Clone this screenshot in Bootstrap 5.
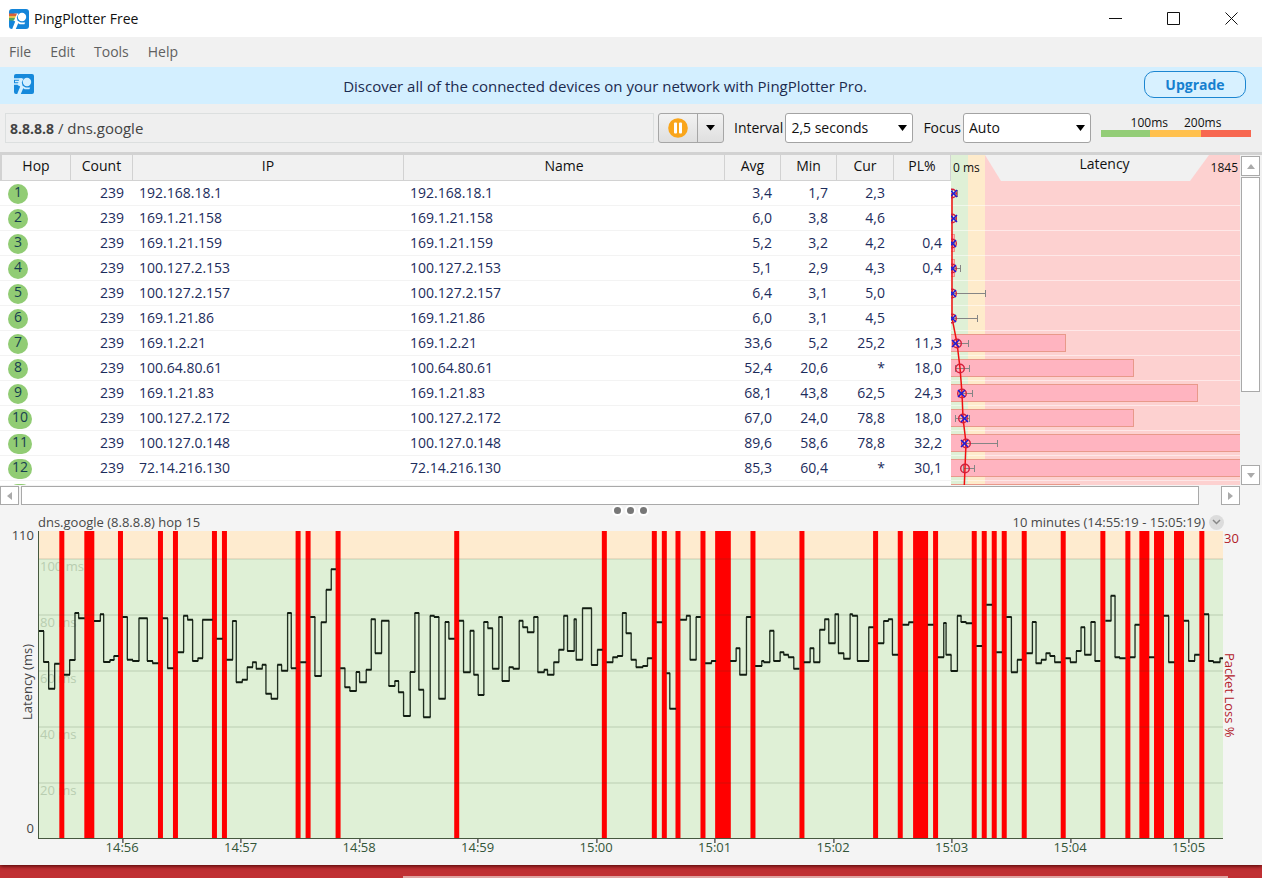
<!DOCTYPE html>
<html lang="en">
<head>
<meta charset="utf-8">
<meta name="viewport" content="width=device-width, initial-scale=1">
<title>PingPlotter Free</title>
<link href="https://cdn.jsdelivr.net/npm/bootstrap@5.3.0/dist/css/bootstrap.min.css" rel="stylesheet">
<style>
body{font:14px/20px "Open Sans","Noto Sans",sans-serif;background:#c03033;color:#111;overflow:hidden}
.win{background:#f4f4f4;box-shadow:0 1px 4px #400}
.titlebar{height:37px;background:#fff;padding-right:2px}
.titlebar button,.menu a,.sb,.chev{border:0;background:none;padding:0;color:#111}
.titlebar button{width:58px;height:37px}
.menu{height:30px;background:#f1f1f1;padding:0 9px;gap:19px}
.menu a{color:#606060;text-decoration:none}
.promo{height:37px;background:#d3efff;color:#1c2b4f}
.promo span{font-size:15px;padding-left:32px}
.upgrade{width:102px;height:27px;padding:0;margin-top:-2px;line-height:20px;border:1px solid #1c86d1;border-radius:10px;background:#d8f1ff;color:#1580cf;font-weight:700}
.tools{height:48px;background:#efefef;padding:0 11px 0 5px}
.target{height:30px;border:1px solid #dcdfdf;color:#444;line-height:28px;padding-left:4px;min-width:0;font-size:15px}
.target b{font-size:14px}
.split{height:30px;width:66px;border:1px solid #a6a6a6;border-radius:3px;background:linear-gradient(#f2f2f2,#dfdfdf);overflow:hidden}
.split button{border:0;background:none;padding:0}
.split button+button{border-left:1px solid #a6a6a6;width:26px}
.pick{width:128px;height:30px;padding:0 5px;border:1px solid #a3a3a3;border-radius:3px;appearance:none;color:#111;background:#fff url("data:image/svg+xml,%3Csvg xmlns='http://www.w3.org/2000/svg' width='9' height='6'%3E%3Cpath d='M0 0H9L4.500 6Z'/%3E%3C/svg%3E") no-repeat right 5px center}
.tools label{margin:0 2px 0 10px}
.legend{width:150px;margin:-4px 0 0 10px;font-size:12px;line-height:14px}
.legend .bar{height:7px;background:linear-gradient(90deg,#93cd77 33%,#ffc04d 33% 67%,#f76750 67%)}
.trace{height:333px;border-top:3px solid #d2d2d2;background:#fff;overflow:hidden}
.hops{table-layout:fixed;border-collapse:separate;border-spacing:0;width:100%;color:#1c2c5c}
.hops th{height:26px;padding:0 0 4px;background:#f1f1f1;border:solid #d2d2d2;border-width:0 1px 1px 0;font-weight:400;text-align:center;color:#111;line-height:20px}
.hops th:first-child{border-left:2px solid #d2d2d2}
.hops td{height:25px;padding:0 9px 1px;border-bottom:1px solid #f3f3f3;text-align:right;line-height:20px}
.hops td:nth-child(1){text-align:left;padding:0 8px}
.hops td:nth-child(3),.hops td:nth-child(4){text-align:left;padding-left:6px}
.hops td:last-child{padding-right:9px}
.pill{display:inline-block;min-width:20px;height:20px;padding:0 4px;border-radius:10px;background:#91cc74;line-height:16px;color:#173f50;text-align:center;vertical-align:top;margin-top:2px}
.lat{width:289px;overflow:hidden}
.lat span{position:absolute;line-height:20px}
.vs{width:22px;background:#f2f2f2;padding:1px 2px 0 1px}
.sb{width:19px;height:20px;border:1px solid #a9a9a9;background:#fff;line-height:0;flex:none}
.thumb{border:1px solid #a9a9a9;background:#fff}
.hs{height:19px;padding-right:22px;margin-top:1px}
.dots{height:10px;gap:6px;padding-right:1px}
.dots i{width:7px;height:7px;border-radius:50%;background:#777;box-shadow:0 0 0 2px #fff}
.cap{height:16px;padding:0 38px 2px;font-size:13px;line-height:14px;color:#484848}
.chev{width:15px;height:15px;border-radius:50%;background:#dcdcdc;line-height:0}
.side{width:38px;font-size:13px;line-height:14px;color:#444}
.side.r{width:39px;color:#b22028}
.turn{writing-mode:vertical-rl}
.plot{background:linear-gradient(#feebcf 9%,#dff0d6 9%);border:solid #46583f;border-width:0 0 1px 1px;min-width:0}
.plot span{position:absolute;left:1px;color:#b8cdb0;font-size:13px;line-height:14px}
.axis{height:26px;padding:0 39px 0 38px;color:#335538;font-size:13px;line-height:16px}
.axis span{position:absolute;transform:translateX(-50%)}
.axis span::before{content:"";position:absolute;left:50%;top:0;height:4px;border-left:1px solid #111}
.desk{height:13px;padding:11px 34px 0 403px}
.desk div{height:2px;background:#dfa4a2}
svg{display:block}
</style>
</head>
<body class="vh-100 d-flex flex-column">
<svg width="0" height="0" class="position-absolute"><defs>
<g id="runner"><circle cx="13" cy="8" r="4.200"/><path d="M5.500 4.500h4L7.800 8.500l.8 3.200 3.200 1.800h4.400l-.8 1.700h-4.600L9.200 14.200 6.800 20H3.200l3-7.600L3.500 11z"/></g></defs></svg>
<main class="win flex-grow-1 d-flex flex-column">
<header class="titlebar d-flex align-items-center">
<svg class="ms-2 me-1" width="22" height="20" viewBox="-1 0 22 20"><rect width="20" height="20" rx="3" fill="#1485d9"/><use href="#runner" fill="#fff"/><path d="M0 4.500h8L7 7H0z" fill="#d9603a"/><path d="M0 7h7L6 9H0z" fill="#e6c04a"/><path d="M0 9h6l-1 2.500H0z" fill="#54a65a"/></svg>
<span>PingPlotter Free</span>
<div class="ms-auto d-flex">
<button aria-label="Minimize"><svg class="mx-auto" width="13" height="13"><path d="M0 6.500h13" stroke="#111"/></svg></button>
<button aria-label="Maximize"><svg class="mx-auto" width="13" height="13"><path d="M.5.500h12v12H.5z" fill="none" stroke="#111"/></svg></button>
<button aria-label="Close"><svg class="mx-auto" width="13" height="13"><path d="M.5.500l12 12m0-12l-12 12" stroke="#111"/></svg></button>
</div></header>
<nav class="menu d-flex align-items-center"><a href="#">File</a><a href="#">Edit</a><a href="#">Tools</a><a href="#">Help</a></nav>
<div class="promo d-flex align-items-center">
<svg style="margin:-3px 0 0 14px" width="20" height="20"><rect width="20" height="20" rx="2" fill="#1689db"/><path d="M0 5h8M1 7.500h6M0 10h5" stroke="#d3efff" stroke-width="1.300"/><use href="#runner" fill="#d3efff"/></svg>
<span class="flex-grow-1 text-center">Discover all of the connected devices on your network with PingPlotter Pro.</span>
<button class="upgrade me-3">Upgrade</button></div>
<div class="tools d-flex align-items-center">
<div class="target flex-grow-1" role="textbox" contenteditable="true" aria-label="Target" spellcheck="false"><b>8.8.8.8</b> / dns.google</div>
<div class="split d-flex ms-1"><button class="flex-grow-1" aria-label="Pause"><svg class="mx-auto" width="20" height="20"><circle cx="10" cy="10" r="9.800" fill="#f9a51b"/><rect x="6" y="4.500" width="3" height="11" rx="1" fill="#fff"/><rect x="11" y="4.500" width="3" height="11" rx="1" fill="#fff"/></svg></button><button aria-label="Pause options"><svg class="mx-auto" width="9" height="6"><path d="M0 0h9L4.500 5.500z"/></svg></button></div>
<label for="iv">Interval</label><select class="pick" id="iv"><option>2,5 seconds</option></select>
<label for="fc">Focus</label><select class="pick" id="fc"><option>Auto</option></select>
<div class="legend"><div class="d-flex justify-content-center gap-3"><span>100ms</span><span>200ms</span></div><div class="bar"></div></div>
</div>
<section class="trace d-flex">
<div class="flex-grow-1"><table class="hops"><colgroup><col style="width:71px"><col style="width:62px"><col style="width:28.500%"><col><col style="width:56px"><col style="width:56px"><col style="width:57px"><col style="width:57px"></colgroup>
<thead><tr><th>Hop<th>Count<th>IP<th>Name<th>Avg<th>Min<th>Cur<th>PL%</tr></thead><tbody id="rows"></tbody></table></div>
<div class="lat position-relative flex-shrink-0"><svg id="lat" width="290" height="330"><rect width="18" height="330" fill="#dff0d6"/><rect x="17" width="17" height="330" fill="#feebcb"/><rect x="34" width="256" height="330" fill="#fdd1d0"/><path d="M34 0H258L239 26H50z" fill="#f1f1f1"/></svg>
<span style="left:2px;top:3px;font-size:12px">0 ms</span><span style="left:0;right:0;top:-1px;text-align:center;padding-left:18px">Latency</span><span style="right:2px;top:3px;font-size:12px">1845</span></div>
<div class="vs d-flex flex-column flex-shrink-0"><button class="sb" aria-label="Scroll up"><svg class="mx-auto" width="8" height="5"><path d="M0 5h8L4 0z" fill="#aaa"/></svg></button><div class="thumb" style="height:215px;margin-top:1px"></div><button class="sb mt-auto" aria-label="Scroll down"><svg class="mx-auto" width="8" height="5"><path d="M0 0h8L4 5z" fill="#aaa"/></svg></button></div>
</section>
<div class="hs d-flex"><button class="sb h-100" aria-label="Scroll left"><svg class="mx-auto" width="5" height="8"><path d="M5 0v8L0 4z" fill="#aaa"/></svg></button><div class="thumb flex-grow-1" style="margin:0 22px 0 2px"></div><button class="sb h-100" aria-label="Scroll right"><svg class="mx-auto" width="5" height="8"><path d="M0 0v8l5-4z" fill="#aaa"/></svg></button></div>
<div class="dots d-flex justify-content-center align-items-center"><i></i><i></i><i></i></div>
<div class="cap d-flex align-items-center"><span>dns.google (8.8.8.8) hop 15</span><span class="ms-auto me-1">10 minutes (14:55:19 - 15:05:19)</span><button class="chev" aria-label="Time range"><svg class="mx-auto" width="9" height="6"><path d="M1 1l3.500 3.500L8 1" fill="none" stroke="#888" stroke-width="1.500"/></svg></button></div>
<section class="flex-grow-1 d-flex" style="min-height:0">
<div class="side d-flex flex-column justify-content-between align-items-end pe-1 position-relative"><span style="margin-top:-3px">110</span><span class="turn" style="transform:rotate(180deg)">Latency (ms)</span><span class="pb-1">0</span></div>
<div class="plot flex-grow-1 position-relative" id="plot"></div>
<div class="side r position-relative"><span style="padding-left:1px">30</span><span class="turn position-absolute top-50 start-0" style="transform:translateY(-32px)">Packet Loss %</span></div>
</section>
<div class="axis"><div class="position-relative" id="axis"></div></div>
</main>
<footer class="desk"><div></div></footer>
<script src="https://cdn.jsdelivr.net/npm/bootstrap@5.3.0/dist/js/bootstrap.bundle.min.js"></script>
<script>
const hops=[["192.168.18.1","3,4","1,7","2,3",""],["169.1.21.158","6,0","3,8","4,6",""],["169.1.21.159","5,2","3,2","4,2","0,4"],["100.127.2.153","5,1","2,9","4,3","0,4"],["100.127.2.157","6,4","3,1","5,0",""],["169.1.21.86","6,0","3,1","4,5",""],["169.1.2.21","33,6","5,2","25,2","11,3"],["100.64.80.61","52,4","20,6","*","18,0"],["169.1.21.83","68,1","43,8","62,5","24,3"],["100.127.2.172","67,0","24,0","78,8","18,0"],["100.127.0.148","89,6","58,6","78,8","32,2"],["72.14.216.130","85,3","60,4","*","30,1"]];
document.getElementById("rows").innerHTML=hops.map((h,i)=>`<tr><td><span class="pill">${i+1}</span><td>239<td>${h[0]}<td>${h[0]}${h.slice(1).map(v=>`<td>${v}`).join("")}</tr>`).join("")+'<tr><td><span class="pill" style="width:24px"></span><td><td><td><td><td><td><td></tr>';
/* per hop: loss bar width, average, current, whisker start, whisker end */
const lat=[[0,1,2,1,6],[0,1,2,1,5],[4,1,1,1,3],[4,1,1,1,9],[0,1,1,1,34],[0,1,1,1,26],[115,6,4,2,17],[183,9,null,4,18],[247,11,10,8,21],[183,12,13,4,18],[300,15,13,12,46],[300,14,null,12,23],[129,13,null,0,0]];
let s="",line="M1 38";
lat.forEach((d,i)=>{const y=38+i*25;
 s+=`<path d="M0 ${y+12.5}H290" stroke="#fff" stroke-opacity=".5"/>`;
 if(d[0])s+=`<rect x="-1" y="${y-8.5}" width="${d[0]+.5}" height="17" fill="#ffb4c0" stroke="#e8998a"/>`;
 if(d[4])s+=`<path d="M${d[3]} ${y+.5}H${d[4]}M${d[3]+.5} ${y-3}v7M${d[4]+.5} ${y-3}v7" stroke="#858585"/>`;
 line+=`L${d[1]} ${y}`;});
s+=`<path d="${line}" fill="none" stroke="#f01010" stroke-width="1.500"/>`;
lat.slice(0,12).forEach((d,i)=>{const y=38+i*25;s+=`<circle cx="${d[1]}" cy="${y+.5}" r="4.300" fill="none" stroke="#d31e3c" stroke-width="1.400"/>`;
 if(d[2]!==null)s+=`<path d="M${d[2]-3} ${y-3}l7 7m0-7l-7 7" stroke="#1b1bd8" stroke-width="1.500"/>`;});
document.getElementById("lat").innerHTML+=s;

/* latency steps: x y x y … x, one run per unbroken stretch */
const runs=`116 377 130 470 145 550 163 475 177|192 508 208 464 224 323 235 339 252|282 347 300 327 310 470 329 464 341 452 354|368 335 381 463 397 467 416 339 441 467 457 474 473|488 339 502 489 518|533 441 550 331 562 343 577 467 593 459 607 343 636|650 400 666|680 463 697 347 708 531 726 523 741 486 757 471 768 490 786 478 797 565 813 580 832 478 844 496 862 323 873 489 887|901 471 917|931 335 944 512 963 351 978 253 993 192 1006|1021 489 1034 546 1049 557 1068 500 1078 531 1098 493 1113 342 1125 444 1144 346 1166 542 1184 527 1195 561 1210 632 1230 500 1244 323 1256 553 1270 636 1290 331 1302 335 1316 580 1335 350 1346 400 1362|1377 346 1390 501 1410 376 1421 508 1434 569 1451 350 1463 369 1477 490 1496 335 1506 527 1527 486 1539 490 1557 346 1568 366 1582 381 1601 335 1613 501 1632 493 1642 508 1661 471 1676 433 1691 331 1702 437 1722 342 1728 463 1747 309 1774 479 1792 433 1806|1820 471 1838 456 1852 452 1867 323 1878 384 1893 463 1908 486 1928 482 1942 459 1955|1970 351 1985|2000 504 2009 610 2027|2041 343 2059 331 2070 463 2088 335 2101|2116 474 2134 467 2147|2191 467 2208 429 2219 508 2239 335 2252|2266 482 2285 467 2291 471 2309 376 2321 467 2340 441 2351 448 2365 456 2381 490 2397|2412 471 2430 429 2441 471 2459 373 2474 342 2486 414 2505 327 2515 444 2531 460 2550 327 2557 331 2572 467 2606 366 2619|2634 414 2651 347 2665 342 2677 448 2693|2708 358 2726 351 2739|2784 358 2799|2814 456 2831 353 2838 448 2853 497 2872 331 2883 350 2898 354 2915|2930 422 2945|2960 298 2975|2990 441 3005|3020 335 3034 501 3052 463 3065|3080 444 3097 350 3108 474 3124 463 3138 444 3150 452 3164 471 3182|3197 459 3211 471 3229 437 3243 366 3254 448 3273 350 3285 467 3300|3317 346 3333 271 3345 456 3359 459 3376|3391 456 3405 358 3418|3448 456 3462|3492 331 3506 471 3522|3552 346 3566 467 3584 448 3598|3613 327 3626 467 3640 471 3660 459 3669`;
const loss=[177,192,252,282,353,368,473,488,518,533,635,650,665,680,886,901,916,931,1006,1021,1362,1377,1805,1820,1955,1970,1985,2000,2026,2041,2101,2116,2145,2192,2251,2266,2398,2413,2619,2634,2693,2708,2739,2784,2799,2814,2915,2930,2945,2960,2975,2990,3005,3020,3065,3080,3182,3197,3301,3316,3376,3391,3418,3448,3462,3492,3522,3552,3598,3613];
let flat="",rise="",bars="";
runs.split("|").forEach(r=>{const n=r.split(" ").map(Number);
 for(let i=0;i<n.length-2;i+=2){flat+=`M${n[i]-1} ${n[i+1]}H${n[i+2]+1}`;if(i)rise+=`M${n[i]} ${n[i-1]}V${n[i+1]}`;}});
for(let i=0;i<loss.length;i+=2)bars+=`M${loss[i]} 77H${loss[i+1]}V998H${loss[i]}z`;
let grid="",labels="";
[100,80,60,40,20].forEach((v,i)=>{const y=161+i*168;grid+=`M116 ${y}H3669`;labels+=`<span style="top:${(y-77)/9.21}%">${v} ms</span>`;});
document.getElementById("plot").innerHTML=labels+`<svg class="position-absolute w-100 h-100" viewBox="116 77 3553 921" preserveAspectRatio="none" fill="none"><path d="${bars}" fill="#f00"/><path d="${grid}" stroke="#203a20" stroke-opacity=".13" stroke-width="5"/><path d="${rise}" stroke="#223022" stroke-width="4"/><path d="${flat}" stroke="#111c11" stroke-width="6"/></svg>`;
document.getElementById("axis").innerHTML=["14:56","14:57","14:58","14:59","15:00","15:01","15:02","15:03","15:04","15:05"].map((t,i)=>`<span style="left:${7.1+i*10}%">${t}</span>`).join("");
</script>
</body>
</html>
